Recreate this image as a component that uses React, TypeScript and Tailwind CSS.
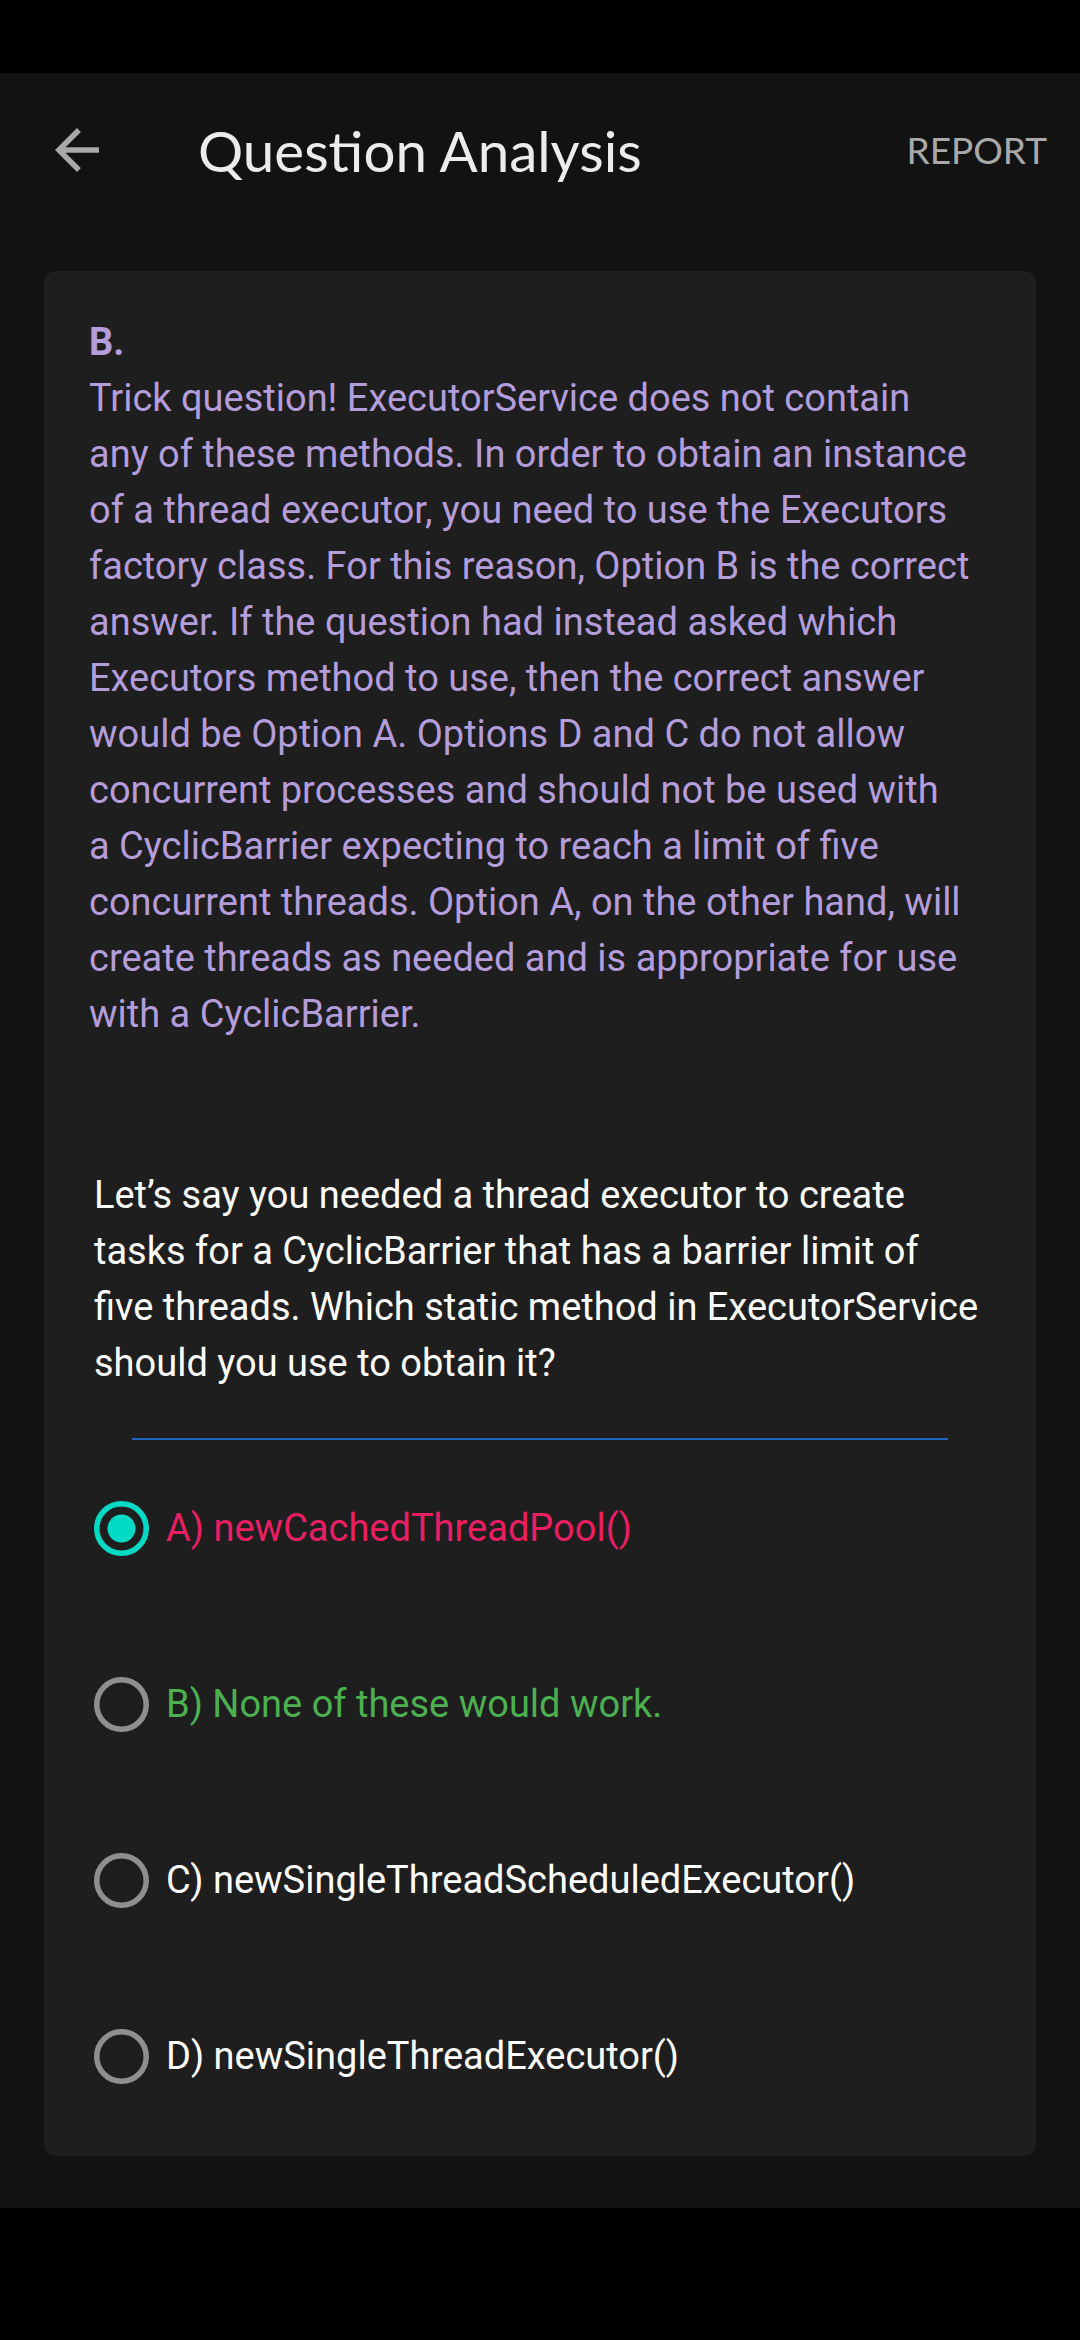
import React from "react";

const body = { fontFamily: "Roboto, 'Noto Sans', sans-serif" };
const head = { fontFamily: "Lato, 'Open Sans', sans-serif" };

function Radio({ checked }: { checked?: boolean }) {
  return (
    <svg width="55" height="55" viewBox="0 0 55 55" className="shrink-0">
      <circle
        cx="27.5"
        cy="27.5"
        r="24.75"
        fill="none"
        stroke={checked ? "#03DAC5" : "#8f8f8f"}
        strokeWidth="5.5"
      />
      {checked && <circle cx="27.5" cy="27.5" r="14" fill="#03DAC5" />}
    </svg>
  );
}

function Option({ label, color, checked }: { label: string; color: string; checked?: boolean }) {
  return (
    <div className="h-[176px] flex items-center pl-[50px]">
      <Radio checked={checked} />
      <span className={`ml-[17px] text-[38px] leading-[56px] ${color}`} style={body}>
        {label}
      </span>
    </div>
  );
}

const lines = [
  "Trick question! ExecutorService does not contain",
  "any of these methods. In order to obtain an instance",
  "of a thread executor, you need to use the Executors",
  "factory class. For this reason, Option B is the correct",
  "answer. If the question had instead asked which",
  "Executors method to use, then the correct answer",
  "would be Option A. Options D and C do not allow",
  "concurrent processes and should not be used with",
  "a CyclicBarrier expecting to reach a limit of five",
  "concurrent threads. Option A, on the other hand, will",
  "create threads as needed and is appropriate for use",
  "with a CyclicBarrier.",
];

const qLines = [
  "Let’s say you needed a thread executor to create",
  "tasks for a CyclicBarrier that has a barrier limit of",
  "five threads. Which static method in ExecutorService",
  "should you use to obtain it?",
];

export default function App() {
  return (
    <div className="w-[1080px] h-[2340px] bg-black flex flex-col overflow-hidden">
      <div className="h-[73px] bg-black shrink-0" />
      <div className="h-[2135px] bg-[#121212] flex flex-col shrink-0">
        <div className="h-[154px] flex items-center relative shrink-0">
          <svg width="66" height="66" viewBox="0 0 24 24" className="ml-[44px] shrink-0">
            <path
              d="M20 11H7.83l5.59-5.59L12 4l-8 8 8 8 1.41-1.41L7.83 13H20v-2z"
              fill="#a8a8a8"
            />
          </svg>
          <div className="ml-[88px] text-[56.5px] text-[#ececec]" style={head}>
            Question Analysis
          </div>
          <div className="ml-auto mr-[33px] text-[37px] text-[#a9a9a9]" style={head}>
            REPORT
          </div>
        </div>
        <div className="mx-[44px] mt-[44px] h-[1885px] bg-[#1e1e1e] rounded-[12px] flex flex-col">
          <div
            className="pt-[43px] px-[45px] text-[38px] leading-[56px] text-[#b39ddb] whitespace-nowrap"
            style={body}
          >
            <div className="font-bold">B.</div>
            {lines.map((l) => (
              <div key={l}>{l}</div>
            ))}
          </div>
          <div
            className="mt-[125px] pl-[50px] text-[38px] leading-[56px] text-white whitespace-nowrap"
            style={body}
          >
            {qLines.map((l) => (
              <div key={l}>{l}</div>
            ))}
          </div>
          <div className="mt-[47px] mx-auto w-[816px] h-[2px] bg-[#1c63c4]" />
          <Option label="A) newCachedThreadPool()" color="text-[#e91e63]" checked />
          <Option label="B) None of these would work." color="text-[#4caf50]" />
          <Option label="C) newSingleThreadScheduledExecutor()" color="text-white" />
          <Option label="D) newSingleThreadExecutor()" color="text-white" />
        </div>
      </div>
    </div>
  );
}
